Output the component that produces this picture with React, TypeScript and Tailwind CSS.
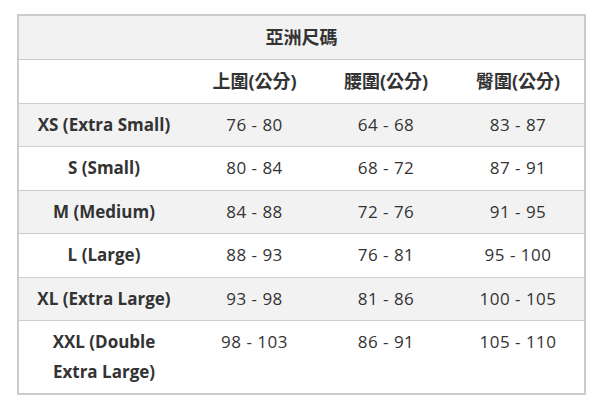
import React from "react";

const rows: [string, string, string, string][] = [
  ["XS (Extra Small)", "76 - 80", "64 - 68", "83 - 87"],
  ["S (Small)", "80 - 84", "68 - 72", "87 - 91"],
  ["M (Medium)", "84 - 88", "72 - 76", "91 - 95"],
  ["L (Large)", "88 - 93", "76 - 81", "95 - 100"],
  ["XL (Extra Large)", "93 - 98", "81 - 86", "100 - 105"],
  ["XXL (Double Extra Large)", "98 - 103", "86 - 91", "105 - 110"],
];

export default function App() {
  return (
    <div
      className="w-[604px] h-[403px] bg-white pt-[14px] pl-[17px] text-[#333] text-[17px] leading-[30px]"
      style={{ fontFamily: '"Open Sans", "Noto Sans CJK TC", sans-serif' }}
    >
      <table className="w-[569px] border-collapse border-2 border-[#cccccc] table-fixed">
        <colgroup>
          <col className="w-[171px]" />
          <col className="w-[131px]" />
          <col className="w-[132px]" />
          <col className="w-[133px]" />
        </colgroup>
        <thead>
          <tr className="bg-[#f2f2f2] border-b border-[#cccccc]">
            <th colSpan={4} className="h-[44px] py-[6px] text-center font-bold align-middle text-[18px]">
              亞洲尺碼
            </th>
          </tr>
          <tr className="bg-white border-b border-[#cccccc]">
            <th className="h-[44px] py-[6px]"></th>
            <th className="py-[6px] text-center font-bold text-[18px]">上圍(公分)</th>
            <th className="py-[6px] text-center font-bold text-[18px]">腰圍(公分)</th>
            <th className="py-[6px] text-center font-bold text-[18px]">臀圍(公分)</th>
          </tr>
        </thead>
        <tbody>
          {rows.map((r, i) => (
            <tr
              key={r[0]}
              className={`${i % 2 === 0 ? "bg-[#f2f2f2]" : "bg-white"} ${i < rows.length - 1 ? "border-b border-[#cccccc]" : ""}`}
            >
              <td className={`h-[43.5px] py-[6px] px-[8px] text-center font-bold align-top ${i === rows.length - 1 ? "px-[30px] pb-[6px]" : ""}`}>
                {r[0]}
              </td>
              <td className="py-[6px] text-center align-top tracking-[0.5px]">{r[1]}</td>
              <td className="py-[6px] text-center align-top tracking-[0.5px]">{r[2]}</td>
              <td className="py-[6px] text-center align-top tracking-[0.5px]">{r[3]}</td>
            </tr>
          ))}
        </tbody>
      </table>
    </div>
  );
}
